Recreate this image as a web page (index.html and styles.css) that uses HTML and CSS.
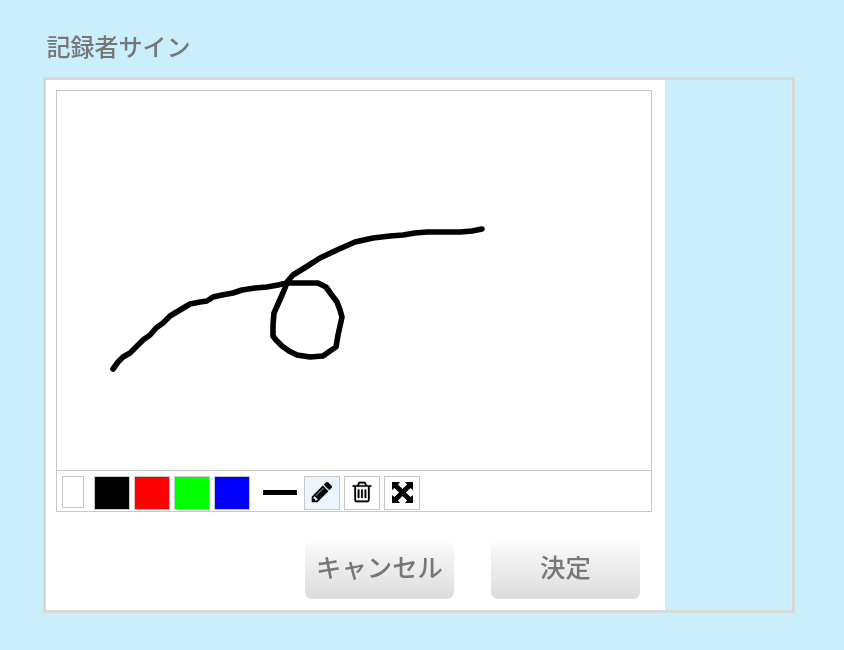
FILE: index.html
```html
<!DOCTYPE html>
<html lang="ja">
<head>
<meta charset="utf-8">
<title>記録者サイン</title>
<link rel="stylesheet" href="styles.css">
</head>
<body>
<h1 class="title">記録者サイン</h1>
<div class="frame">
  <div class="panel">
    <div class="sign-box">
      <svg class="canvas" width="594" height="379" viewBox="57 91 594 379">
        <path class="stroke" d="M113 369L118 362L123 357L130 353L136 347L143 340L150 335L156 328L163 323L170 316L180 310L190 304L200 302L207 301L213 297L222 295L233 293L242 290L255 288L267 287L278 285L287 283L300 283L318 283L326 287L331 294L337 302L340 310L342 317L340 326L338 335L336 347L330 351L323 356L310 357L297 355L289 351L282 346L276 340L273 336L273 325L274 313L278 304L282 295L285 288L287 282L293 275L306 267L320 258L337 250L355 242L373 238L390 236L403 235L415 233L427 232L445 232L460 232L472 231L482 229"/>
      </svg>
      <div class="toolbar">
        <span class="swatch swatch-white"></span>
        <span class="swatch swatch-black"></span>
        <span class="swatch swatch-red"></span>
        <span class="swatch swatch-green"></span>
        <span class="swatch swatch-blue"></span>
        <span class="line-size"></span>
        <span class="tool tool-active">
          <svg width="24" height="24" viewBox="0 0 1792 1792"><path d="M491 1536l91-91-235-235-91 91v107h128v128h107zm523-928q0-22-22-22-10 0-17 7l-542 542q-7 7-7 17 0 22 22 22 10 0 17-7l542-542q7-7 7-17zm-54-192l416 416-832 832h-416v-416zm683 96q0 53-37 90l-166 166-416-416 166-165q36-38 90-38 53 0 91 38l235 234q37 39 37 91z"/></svg>
        </span>
        <span class="tool">
          <svg class="icon-heavy" width="24" height="24" viewBox="0 0 1792 1792"><path d="M704 736v576q0 14-9 23t-23 9h-64q-14 0-23-9t-9-23v-576q0-14 9-23t23-9h64q14 0 23 9t9 23zm256 0v576q0 14-9 23t-23 9h-64q-14 0-23-9t-9-23v-576q0-14 9-23t23-9h64q14 0 23 9t9 23zm256 0v576q0 14-9 23t-23 9h-64q-14 0-23-9t-9-23v-576q0-14 9-23t23-9h64q14 0 23 9t9 23zm128 724v-948h-896v948q0 22 7 40.500t14.500 27 10.500 8.500h832q3 0 10.500-8.500t14.500-27 7-40.500zm-672-1076h448l-48-117q-7-9-17-11h-317q-10 2-17 11zm928 32v64q0 14-9 23t-23 9h-96v948q0 83-47 143.500t-113 60.500h-832q-66 0-113-58.500t-47-141.500v-952h-96q-14 0-23-9t-9-23v-64q0-14 9-23t23-9h309l70-167q15-37 54-63t79-26h320q40 0 79 26t54 63l70 167h309q14 0 23 9t9 23z"/></svg>
        </span>
        <span class="tool">
          <svg width="21" height="21" viewBox="0 0 22 22"><path d="M0 0H8.500L6.200 2.600L11 7.400L15.800 2.600L13.500 0H22V8.500L19.400 6.200L14.600 11L19.400 15.800L22 13.500V22H13.500L15.800 19.400L11 14.600L6.200 19.400L8.500 22H0V13.500L2.600 15.800L7.400 11L2.600 6.200L0 8.500Z"/></svg>
        </span>
      </div>
    </div>
    <div class="actions">
      <button class="btn" type="button">キャンセル</button>
      <button class="btn" type="button">決定</button>
    </div>
  </div>
</div>
</body>
</html>
```
FILE: styles.css
```css
html, body {
  margin: 0;
  padding: 0;
}
body {
  width: 844px;
  height: 650px;
  overflow: hidden;
  background: #caeefb;
  font-family: "Noto Sans CJK JP", "Liberation Sans", sans-serif;
  padding: 28px 49px 37px 43px;
  box-sizing: border-box;
}
.title {
  margin: 0 0 13px 3.5px;
  height: 36px;
  font-size: 24px;
  line-height: 36px;
  font-weight: 500;
  color: #777;
  filter: blur(0.4px);
}
.frame {
  width: 752px;
  height: 536px;
  box-sizing: border-box;
  border: 3px solid #d9d9d9;
}
.panel {
  width: 619px;
  height: 100%;
  box-sizing: border-box;
  background: #fff;
  padding: 10px 13px 0 10px;
}
.sign-box {
  width: 596px;
  height: 422px;
  box-sizing: border-box;
  border: 1px solid #c8c8c8;
  display: flex;
  flex-direction: column;
}
.canvas {
  display: block;
  flex: none;
}
.stroke {
  fill: none;
  stroke: #000;
  stroke-width: 5.6;
  stroke-linecap: round;
  stroke-linejoin: round;
  filter: blur(0.3px);
}
.toolbar {
  flex: 1;
  border-top: 1px solid #c8c8c8;
  display: flex;
  align-items: flex-start;
  padding: 5px 0 0 5px;
}
.swatch {
  box-sizing: border-box;
  width: 36px;
  height: 34px;
  margin-right: 4px;
  border: 1px solid #c8c8c8;
}
.swatch-white {
  width: 22px;
  height: 32px;
  margin-right: 10px;
  background: #fff;
}
.swatch-black { background: #000; }
.swatch-red { background: #f00; }
.swatch-green { background: #0f0; }
.swatch-blue { background: #00f; }
.line-size {
  width: 34px;
  height: 5px;
  margin: 14px 7px 0 9px;
  background: #000;
}
.tool {
  box-sizing: border-box;
  width: 36px;
  height: 34px;
  margin-right: 4px;
  padding-bottom: 2px;
  border: 1px solid #c8c8c8;
  background: #fff;
  display: flex;
  align-items: center;
  justify-content: center;
}
.tool-active {
  background: #eaf5fd;
}
.icon-heavy path {
  stroke: #000;
  stroke-width: 15;
}
.actions {
  display: flex;
  justify-content: flex-end;
  gap: 37px;
  margin-top: 28px;
  padding-right: 12px;
}
.btn {
  width: 149px;
  height: 59px;
  border: 0;
  border-radius: 7px;
  padding: 0 0 7px;
  background: linear-gradient(to bottom, #fff 0%, #f3f3f3 25%, #dcdcdc 100%);
  color: #777;
  font-family: inherit;
  font-size: 25.4px;
  font-weight: 500;
  filter: blur(0.4px);
}
```
